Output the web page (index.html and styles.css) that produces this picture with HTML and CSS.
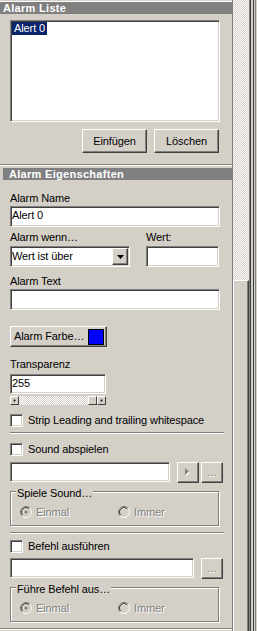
FILE: index.html
```html
<!DOCTYPE html>
<html>
<head>
<meta charset="utf-8">
<title>Alarm</title>
<link rel="stylesheet" href="styles.css">
</head>
<body>
<div class="window">
  <div class="panel">
    <div class="hdr hdr-list">Alarm Liste</div>
    <div class="listbox sunken"><span class="list-item">Alert 0</span></div>
    <div class="btn-row">
      <div class="btn btn-wide">Einfügen</div>
      <div class="btn btn-wide">Löschen</div>
    </div>
    <div class="split"></div>
    <div class="hdr hdr-props">Alarm Eigenschaften</div>
    <div class="body">
      <div class="label l-name">Alarm Name</div>
      <div class="edit sunken e-full">Alert 0</div>
      <div class="cond-row">
        <div class="col col-combo">
          <div class="label">Alarm wenn…</div>
          <div class="combo sunken">
            <span class="combo-text">Wert ist über</span>
            <span class="btn drop"><svg width="7" height="4" viewBox="0 0 7 4"><polygon points="0,0 7,0 3.5,4" fill="#000"/></svg></span>
          </div>
        </div>
        <div class="col">
          <div class="label">Wert:</div>
          <div class="edit sunken e-val"></div>
        </div>
      </div>
      <div class="label l-text">Alarm Text</div>
      <div class="edit sunken e-full e-text"></div>
      <div class="btn btn-color"><span>Alarm Farbe…</span><span class="swatch"></span></div>
      <div class="label l-trans">Transparenz</div>
      <div class="edit sunken e-trans">255</div>
      <div class="slider">
        <span class="sbtn"><i class="dot"></i></span>
        <span class="strack"></span>
        <span class="sbtn"></span>
        <span class="sbtn"><i class="dot"></i></span>
      </div>
      <div class="check c-strip"><span class="box sunken"></span><span>Strip Leading and trailing whitespace</span></div>
      <div class="sep s1"></div>
      <div class="check c-sound"><span class="box sunken"></span><span>Sound abspielen</span></div>
      <div class="file-row r-sound">
        <div class="edit sunken e-sound"></div>
        <div class="btn sq play"><svg width="6" height="9" viewBox="0 0 6 9"><polygon points="1,1 5,4.5 1,8" fill="#fff"/><polygon points="0,0 4,3.5 0,7" fill="#808080"/></svg></div>
        <div class="btn sq dots">...</div>
      </div>
      <div class="group g1">
        <div class="glabel">Spiele Sound…</div>
        <div class="radios">
          <div class="radio r-first">
            <svg width="12" height="12" viewBox="0 0 12 12"><circle cx="6" cy="6" r="4.5" fill="#d4d0c8"/><path d="M2.11 9.89A5.5 5.5 0 0 1 9.89 2.11" stroke="#808080" fill="none"/><path d="M9.89 2.11A5.5 5.5 0 0 1 2.11 9.89" stroke="#fff" fill="none"/><path d="M2.82 9.18A4.5 4.5 0 0 1 9.18 2.82" stroke="#404040" fill="none"/><path d="M9.18 2.82A4.5 4.5 0 0 1 2.82 9.18" stroke="#d4d0c8" fill="none"/><circle cx="6" cy="6" r="1.6" fill="#808080"/></svg>
            <span class="dis">Einmal</span>
          </div>
          <div class="radio">
            <svg width="12" height="12" viewBox="0 0 12 12"><circle cx="6" cy="6" r="4.5" fill="#d4d0c8"/><path d="M2.11 9.89A5.5 5.5 0 0 1 9.89 2.11" stroke="#808080" fill="none"/><path d="M9.89 2.11A5.5 5.5 0 0 1 2.11 9.89" stroke="#fff" fill="none"/><path d="M2.82 9.18A4.5 4.5 0 0 1 9.18 2.82" stroke="#404040" fill="none"/><path d="M9.18 2.82A4.5 4.5 0 0 1 2.82 9.18" stroke="#d4d0c8" fill="none"/></svg>
            <span class="dis">Immer</span>
          </div>
        </div>
      </div>
      <div class="sep s2"></div>
      <div class="check c-cmd"><span class="box sunken"></span><span>Befehl ausführen</span></div>
      <div class="file-row r-cmd">
        <div class="edit sunken e-cmd"></div>
        <div class="btn sq dots">...</div>
      </div>
      <div class="group g2">
        <div class="glabel">Führe Befehl aus…</div>
        <div class="radios">
          <div class="radio r-first">
            <svg width="12" height="12" viewBox="0 0 12 12"><circle cx="6" cy="6" r="4.5" fill="#d4d0c8"/><path d="M2.11 9.89A5.5 5.5 0 0 1 9.89 2.11" stroke="#808080" fill="none"/><path d="M9.89 2.11A5.5 5.5 0 0 1 2.11 9.89" stroke="#fff" fill="none"/><path d="M2.82 9.18A4.5 4.5 0 0 1 9.18 2.82" stroke="#404040" fill="none"/><path d="M9.18 2.82A4.5 4.5 0 0 1 2.82 9.18" stroke="#d4d0c8" fill="none"/><circle cx="6" cy="6" r="1.6" fill="#808080"/></svg>
            <span class="dis">Einmal</span>
          </div>
          <div class="radio">
            <svg width="12" height="12" viewBox="0 0 12 12"><circle cx="6" cy="6" r="4.5" fill="#d4d0c8"/><path d="M2.11 9.89A5.5 5.5 0 0 1 9.89 2.11" stroke="#808080" fill="none"/><path d="M9.89 2.11A5.5 5.5 0 0 1 2.11 9.89" stroke="#fff" fill="none"/><path d="M2.82 9.18A4.5 4.5 0 0 1 9.18 2.82" stroke="#404040" fill="none"/><path d="M9.18 2.82A4.5 4.5 0 0 1 2.82 9.18" stroke="#d4d0c8" fill="none"/></svg>
            <span class="dis">Immer</span>
          </div>
        </div>
      </div>
    </div>
    <div class="bottom-line"></div>
  </div>
  <div class="vscroll">
    <div class="track"></div>
    <div class="thumb"></div>
  </div>
  <div class="frame"></div>
</div>
</body>
</html>
```
FILE: styles.css
```css
* { box-sizing: border-box; }
html, body { margin: 0; padding: 0; }
body {
  width: 257px;
  height: 631px;
  overflow: hidden;
  background: #d4d0c8;
  font-family: "Liberation Sans", Arial, sans-serif;
  font-size: 11px;
  line-height: 13px;
  color: #000;
  letter-spacing: -0.1px;
}
.window { display: flex; height: 631px; }
.panel {
  width: 233px;
  flex: none;
  border-right: 1px solid #808080;
  padding-top: 1px;
  display: flex;
  flex-direction: column;
}
.hdr {
  height: 13px;
  border-top: 1px solid #fff;
  background: #808080;
  color: #fff;
  font-weight: bold;
  line-height: 13px;
  letter-spacing: 0.3px;
  white-space: nowrap;
  overflow: hidden;
}
.hdr-list { padding-left: 3px; }
.hdr-props { height: 12px; border-top: 0; margin: 2px 0 0 3px; padding-left: 6px; }

.sunken {
  background: #fff;
  border: 1px solid;
  border-color: #808080 #fff #fff #808080;
  box-shadow: inset 1px 1px 0 #404040, inset -1px -1px 0 #d4d0c8;
}
.btn {
  background: #d4d0c8;
  border: 1px solid;
  border-color: #fff #404040 #404040 #fff;
  box-shadow: inset -1px -1px 0 #808080;
  display: flex;
  align-items: center;
  justify-content: center;
  white-space: nowrap;
}

.listbox {
  margin: 6px 0 0 10px;
  width: 210px;
  height: 102px;
  padding: 1px 0 0 1px;
}
.list-item {
  display: inline-block;
  background: #0a246a;
  color: #fff;
  padding: 0 2px;
  line-height: 13px;
}
.btn-row { display: flex; gap: 7px; margin: 7px 0 0 82px; }
.btn-wide { width: 65px; height: 24px; }

.split {
  margin-top: 11px;
  height: 2px;
  border-top: 1px solid #808080;
  border-bottom: 1px solid #fff;
}

.body { padding-left: 10px; display: flex; flex-direction: column; align-items: flex-start; }
.label { height: 13px; white-space: nowrap; }
.l-name { margin-top: 12px; margin-bottom: 1px; }
.edit { height: 21px; padding: 2px 0 0 1px; white-space: nowrap; }
.e-full { width: 210px; }

.cond-row { display: flex; gap: 16px; margin-top: 4px; }
.col { display: flex; flex-direction: column; }
.col .label { margin-bottom: 2px; }
.combo {
  width: 120px;
  height: 21px;
  padding: 1px;
  display: flex;
  align-items: stretch;
}
.combo-text { flex: 1; padding: 2px 0 0 0; white-space: nowrap; }
.drop { width: 16px; flex: none; }
.e-val { width: 73px; }

.l-text { margin-top: 8px; margin-bottom: 1px; }
.btn-color {
  margin-top: 16px;
  width: 97px;
  height: 21px;
  justify-content: flex-start;
  padding-left: 3px;
}
.swatch {
  margin-left: auto;
  margin-right: 2px;
  width: 16px;
  height: 16px;
  background: #0000ff;
  border: 1px solid #000;
}
.l-trans { margin-top: 11px; margin-bottom: 3px; }
.e-trans { width: 96px; height: 20px; }

.slider { display: flex; width: 96px; height: 9px; margin-top: 2px; }
.sbtn {
  width: 9px;
  height: 9px;
  flex: none;
  background: #d4d0c8;
  border: 1px solid;
  border-color: #fff #404040 #404040 #fff;
  display: flex;
  align-items: center;
  justify-content: center;
}
.dot { display: block; width: 1px; height: 1px; background: #000; box-shadow: 0 0 0 0.5px #404040; }
.strack {
  flex: 1;
  background-color: #d4d0c8;
  background-image: conic-gradient(#fff 25%, #d4d0c8 0 50%, #fff 0 75%, #d4d0c8 0);
  background-size: 2px 2px;
}

.check { display: flex; align-items: center; gap: 5px; height: 13px; white-space: nowrap; }
.box { width: 13px; height: 13px; flex: none; }
.c-strip { margin-top: 9px; }
.c-sound { margin-top: 9px; }
.c-cmd { margin-top: 6px; }

.sep {
  width: 214px;
  height: 2px;
  border-top: 1px solid #808080;
  border-bottom: 1px solid #fff;
}
.s1 { margin-top: 5px; }
.s2 { margin-top: 6px; }

.file-row { display: flex; align-items: flex-start; }
.r-sound { margin-top: 6px; }
.r-cmd { margin-top: 5px; }
.e-sound { width: 160px; height: 20px; margin-right: 7px; }
.e-cmd { width: 184px; height: 20px; margin-right: 7px; }
.sq { width: 22px; height: 21px; }
.play { margin-right: 2px; }
.dots {
  color: #808080;
  text-shadow: 1px 1px 0 #fff;
  align-items: flex-end;
  padding-bottom: 3px;
  letter-spacing: 0.5px;
}

.group {
  margin-top: 8px;
  width: 209px;
  height: 35px;
  border: 1px solid #808080;
  box-shadow: 1px 1px 0 #fff, inset 1px 1px 0 #fff;
  padding-left: 5px;
}
.glabel {
  width: fit-content;
  background: #d4d0c8;
  margin-top: -5px;
  padding: 0 1px;
  height: 13px;
  white-space: nowrap;
}
.radios { display: flex; margin-top: 6px; margin-left: 4px; }
.radio { display: flex; align-items: center; gap: 4px; height: 12px; white-space: nowrap; }
.radio svg { flex: none; display: block; }
.r-first { width: 98px; }
.dis { color: #808080; text-shadow: 1px 1px 0 #fff; }

.bottom-line {
  margin-top: 6px;
  height: 2px;
  border-top: 1px solid #808080;
  border-bottom: 1px solid #fff;
}

.vscroll { width: 16px; flex: none; display: flex; flex-direction: column; }
.track {
  height: 280px;
  flex: none;
  background-color: #d4d0c8;
  background-image: conic-gradient(#fff 25%, #d4d0c8 0 50%, #fff 0 75%, #d4d0c8 0);
  background-size: 2px 2px;
}
.thumb {
  flex: 1;
  background: #d4d0c8;
  border-top: 1px solid #fff;
  border-left: 1px solid #fff;
  border-right: 1px solid #404040;
  box-shadow: inset -1px 0 0 #808080;
}
.frame {
  width: 8px;
  flex: none;
  background: linear-gradient(to right,
    #808080 0 1px, #404040 1px 2px, #d4d0c8 2px 4px,
    #404040 4px 5px, #d4d0c8 5px 6px, #808080 6px 7px, #d4d0c8 7px 8px);
}
```
